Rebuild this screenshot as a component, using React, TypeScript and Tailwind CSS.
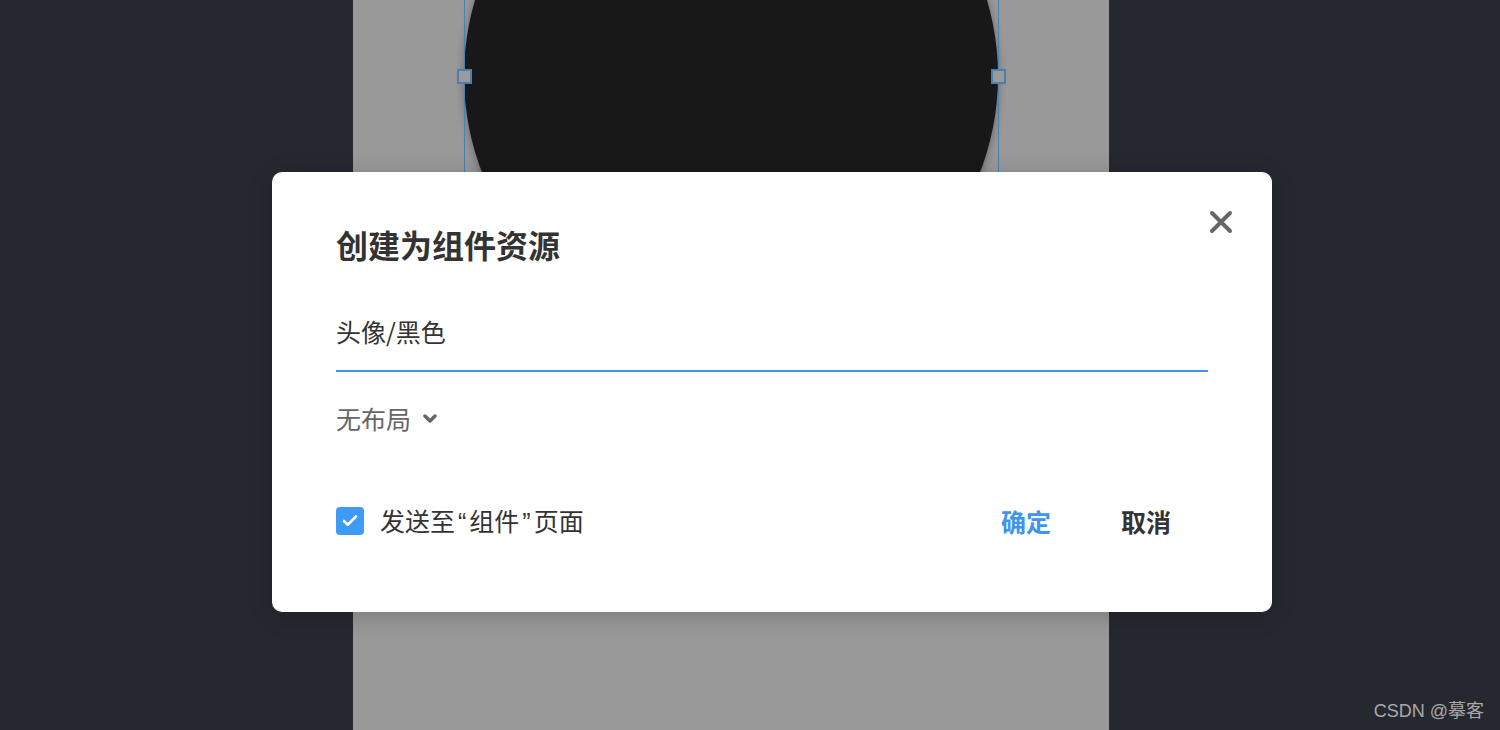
import { Check, X } from 'lucide-react'

export default function App() {
  return (
    <div
      className="relative h-[730px] w-[1500px] overflow-hidden bg-[#262830]"
      style={{ fontFamily: '"Noto Sans CJK SC", "Noto Sans", sans-serif' }}
    >
      {/* canvas page behind the dialog */}
      <div className="relative ml-[353px] h-full w-[756px] overflow-hidden bg-[#989998]">
        <div className="absolute left-[111px] top-[-191px] h-[534px] w-[534px] rounded-full bg-[#181818] shadow-[0_2px_8px_rgba(0,0,0,0.35)]" />
        <div className="absolute left-[111px] top-0 h-[343px] w-px bg-[#4a7fae]" />
        <div className="absolute left-[645px] top-0 h-[343px] w-px bg-[#4a7fae]" />
        <div className="absolute left-[104px] top-[69px] h-[15px] w-[15px] border-2 border-[#4a7fae] bg-[#9a9b9a]" />
        <div className="absolute left-[638px] top-[69px] h-[15px] w-[15px] border-2 border-[#4a7fae] bg-[#9a9b9a]" />
      </div>

      {/* dialog */}
      <div className="absolute left-[272px] top-[172px] flex h-[440px] w-[1000px] flex-col rounded-[10px] bg-white px-[64px] pt-[50px] shadow-[0_4px_24px_rgba(0,0,0,0.2)]">
        <button className="absolute right-[33px] top-[32px] text-[#666]">
          <X size={36} strokeWidth={2.6} />
        </button>
        <h2 className="text-[32px] font-bold leading-[44px] text-[#333]">创建为组件资源</h2>

        <div className="mt-[47px] border-b-2 border-[#3d95f0] pb-[21px]">
          <div className="text-[25px] leading-[36px] text-[#333]">头像/黑色</div>
        </div>

        <div className="mt-[28px] flex items-center gap-[12px] text-[25px] leading-[36px] text-[#666]">
          <span>无布局</span>
          <svg width="14" height="10" viewBox="0 0 14 10" className="mt-[2px]">
            <polyline points="2,2 7,7 12,2" fill="none" stroke="#666" strokeWidth="3.5" strokeLinecap="round" strokeLinejoin="round" />
          </svg>
        </div>

        <div className="mt-[66px] flex items-center">
          <div className="flex h-[28px] w-[28px] items-center justify-center rounded-[4px] bg-[#3d9bf5]">
            <Check size={18} strokeWidth={3.5} className="text-white" />
          </div>
          <span className="ml-[16px] text-[25px] leading-[36px] text-[#333]">
            发送至
            <span className="mx-[3px]" style={{ fontFamily: '"Liberation Sans", sans-serif' }}>“</span>
            组件
            <span className="mx-[3px]" style={{ fontFamily: '"Liberation Sans", sans-serif' }}>”</span>
            页面
          </span>
          <div className="ml-auto flex items-center gap-[70px] pr-[37px]">
            <button className="text-[25px] font-bold leading-[36px] text-[#3d95f0]">确定</button>
            <button className="text-[25px] font-bold leading-[36px] text-[#333]">取消</button>
          </div>
        </div>
      </div>

      <div
        className="absolute bottom-[7px] right-[16px] text-[18px] leading-[24px] text-[#aaaaaa]"
        style={{ fontFamily: '"Liberation Sans", "Noto Sans CJK SC", sans-serif' }}
      >
        CSDN @摹客
      </div>
    </div>
  )
}
